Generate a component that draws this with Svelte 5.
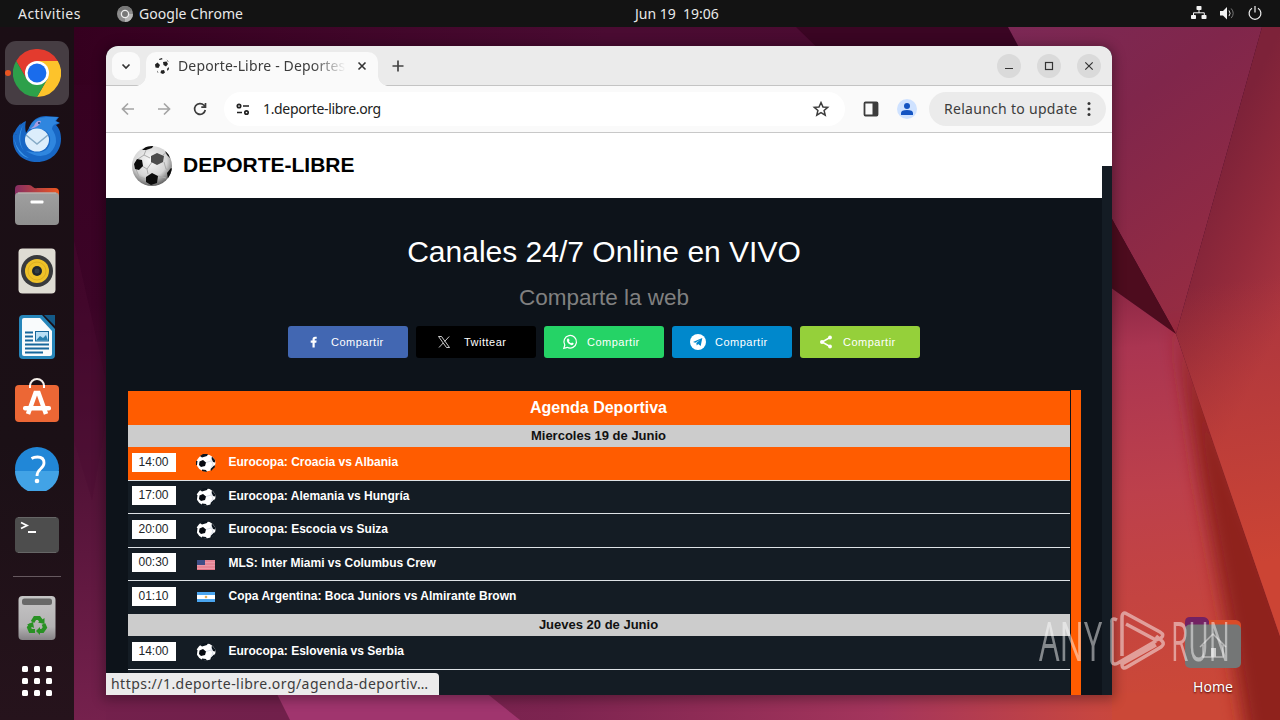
<script>
	const shares = [
		{ name: 'facebook', label: 'Compartir', color: '#4267b2' },
		{ name: 'twitter', label: 'Twittear', color: '#000000' },
		{ name: 'whatsapp', label: 'Compartir', color: '#25d366' },
		{ name: 'telegram', label: 'Compartir', color: '#0088cc' },
		{ name: 'sharethis', label: 'Compartir', color: '#95d03a' }
	]

	const agenda = [
		{
			day: 'Miercoles 19 de Junio',
			events: [
				{ time: '14:00', icon: 'ball', title: 'Eurocopa: Croacia vs Albania', active: true },
				{ time: '17:00', icon: 'ball', title: 'Eurocopa: Alemania vs Hungría' },
				{ time: '20:00', icon: 'ball', title: 'Eurocopa: Escocia vs Suiza' },
				{ time: '00:30', icon: 'usa', title: 'MLS: Inter Miami vs Columbus Crew' },
				{ time: '01:10', icon: 'arg', title: 'Copa Argentina: Boca Juniors vs Almirante Brown' }
			]
		},
		{
			day: 'Jueves 20 de Junio',
			events: [
				{ time: '14:00', icon: 'ball', title: 'Eurocopa: Eslovenia vs Serbia' }
			]
		}
	]

	const dots = [0, 1, 2, 3, 4, 5, 6, 7, 8]
</script>

<div class="desktop">
	<svg class="wallpaper" viewBox="0 0 1280 720" preserveAspectRatio="none">
		<defs>
			<linearGradient id="base" gradientUnits="userSpaceOnUse" x1="0" y1="27" x2="0" y2="720">
				<stop offset="0" stop-color="#35001f" />
				<stop offset=".4" stop-color="#3c0427" />
				<stop offset=".62" stop-color="#4f1135" />
				<stop offset="1" stop-color="#75214d" />
			</linearGradient>
			<linearGradient id="top" x1="0" y1="0" x2="1" y2="0">
				<stop offset="0" stop-color="#35001f" />
				<stop offset=".55" stop-color="#4a0b32" />
				<stop offset="1" stop-color="#4b0b30" />
			</linearGradient>
			<linearGradient id="upper" x1="0" y1="0" x2=".6" y2="1">
				<stop offset="0" stop-color="#7b2855" />
				<stop offset=".4" stop-color="#80264b" />
				<stop offset="1" stop-color="#962c42" />
			</linearGradient>
			<linearGradient id="right" gradientUnits="userSpaceOnUse" x1="1190" y1="210" x2="1310" y2="270">
				<stop offset="0" stop-color="#7d2239" />
				<stop offset=".5" stop-color="#932a3b" />
				<stop offset="1" stop-color="#ab3540" />
			</linearGradient>
			<linearGradient id="rightLow" gradientUnits="userSpaceOnUse" x1="1240" y1="280" x2="1280" y2="560">
				<stop offset="0" stop-color="#ca4433" stop-opacity="0" />
				<stop offset="1" stop-color="#cc4434" />
			</linearGradient>
			<linearGradient id="lower" gradientUnits="userSpaceOnUse" x1="1130" y1="285" x2="1170" y2="700">
				<stop offset="0" stop-color="#8b2744" />
				<stop offset=".15" stop-color="#aa3551" />
				<stop offset=".5" stop-color="#bd404b" />
				<stop offset="1" stop-color="#cb4837" />
			</linearGradient>
			<linearGradient id="bottom" gradientUnits="userSpaceOnUse" x1="74" y1="0" x2="1150" y2="0">
				<stop offset="0" stop-color="#73204c" />
				<stop offset=".2" stop-color="#71204b" />
				<stop offset=".45" stop-color="#7d2450" />
				<stop offset=".75" stop-color="#a4355c" />
				<stop offset=".95" stop-color="#c74640" />
				<stop offset="1" stop-color="#cb4837" />
			</linearGradient>
			<filter id="soft" x="-50%" y="-20%" width="200%" height="140%"><feGaussianBlur stdDeviation="9" /></filter>
		</defs>
		<rect width="1280" height="720" fill="url(#base)" />
		<path d="M74 27H1010L1040 85H74Z" fill="url(#top)" />
		<path d="M796 27H1010L1024 60H830Z" fill="#3a0523" />
		<path d="M74 240L106 380V420L92 500L74 440Z" fill="#4a0d31" opacity=".4" />
		<path d="M106 694H1200V720H106Z" fill="url(#bottom)" />
		<path d="M270 680L290 720H520L470 680Z" fill="#a0356e" />
		<path d="M1008 27H1262L1176 334L1112 219Z" fill="url(#upper)" />
		<path d="M1112 219L1176 334L1100 280V200Z" fill="#4d0c1e" />
		<path d="M1100 280L1176 334L1280 640V694H1100Z" fill="url(#lower)" />
		<path d="M1112 693H1290V720H1112Z" fill="#cb4837" />
		<path d="M1176 320L1300 640V760H1250L1232 650L1200 480Z" fill="#8f231b" filter="url(#soft)" />
		<path d="M1262 27H1280V636L1176 334Z" fill="url(#right)" />
		<path d="M1262 27H1280V636L1176 334Z" fill="url(#rightLow)" />
	</svg>

	<header class="topbar">
		<span class="activities">Activities</span>
		<span class="app">
			<svg width="16" height="16" viewBox="0 0 16 16">
				<circle cx="8" cy="8" r="8" fill="#8b8b8b" />
				<path d="M8 8L1 4A8 8 0 0 1 15 4Z" fill="#777" />
				<path d="M8 8h8a8 8 0 0 1-8 8Z" fill="#b5b5b5" />
				<circle cx="8" cy="8" r="3.6" fill="#777" stroke="#eee" stroke-width="1.3" />
			</svg>
			Google Chrome
		</span>
		<span class="clock">Jun 19&nbsp; 19:06</span>
		<span class="tray">
			<svg width="16" height="16" viewBox="0 0 16 16" fill="#f2f2f2">
				<rect x="5.5" y="0" width="5" height="4" rx=".8" />
				<rect x="0" y="9" width="5" height="4" rx=".8" />
				<rect x="10.500" y="9" width="5" height="4" rx=".8" />
				<path d="M8 4v3M2.500 9V6.800h10.800V9" fill="none" stroke="#f2f2f2" />
			</svg>
			<svg width="16" height="16" viewBox="0 0 16 16" fill="none">
				<path d="M1 5h3L8 1v12.500L4 9.500H1Z" fill="#f2f2f2" />
				<path d="M10 4.500q2.200 2.800 0 5.600" stroke="#ddd" />
				<path d="M12.200 2.500q4 4.800 0 9.600" stroke="#777" />
			</svg>
			<svg width="16" height="16" viewBox="0 0 16 16" fill="none" stroke="#f2f2f2" stroke-width="1.2">
				<path d="M5 2.300A5.900 5.900 0 1 0 11 2.300M8 0v6.500" />
			</svg>
		</span>
	</header>

	<nav class="dock">
		<div class="slot current">
			<svg width="48" height="48" viewBox="0 0 48 48">
				<path d="M24 12H44.800A24 24 0 0 1 24 48L34.400 30Z" fill="#fdc32b" />
				<path d="M3.200 12A24 24 0 0 1 44.800 12H24L13.600 30Z" fill="#e33b2e" />
				<path d="M3.200 12L13.600 30H24L34.400 30L24 48A24 24 0 0 1 3.200 12Z" fill="#2da04a" />
				<circle cx="24" cy="24" r="12" fill="#fff" />
				<circle cx="24" cy="24" r="9.400" fill="#1a6cec" />
			</svg>
		</div>
		<div class="slot">
			<svg width="50" height="48" viewBox="0 0 50 48">
				<path d="M9 8C4 13 1 19 1 26C2 39 12 47 25 47C39 47 49 37 49 24C49 17 47 13 44 10L48 8L44 6L47 2L34 1C26 1 20 5 17 13L14 18C13 14 13 10 14 6C8 8 5 14 4 20L2 17Q0 21 1 26Z" fill="#1867c5" />
				<path d="M17 13Q22 2 34 2H46L43 6L47 8Q40 9 40 14Q49 27 38 38Q28 45 14 36Q40 42 38 22Q36 12 18 14Z" fill="#2f86df" />
				<path d="M2 23Q5 37 17 43Q5 41 2 23M11 10Q5 26 12 36Q3 25 11 10" fill="#3d97e8" />
				<ellipse cx="25" cy="25" rx="12" ry="11.500" fill="#dcedfb" />
				<path d="M14 20L25 29L36 20" fill="none" stroke="#86abc7" stroke-width="1.500" />
				<path d="M22 11Q24 5 29 6Q28 12 18 14Z" fill="#a99ee0" />
				<circle cx="27" cy="8" r="1" fill="#173779" />
			</svg>
		</div>
		<div class="slot">
			<svg width="44" height="42" viewBox="0 0 44 42">
				<defs>
					<linearGradient id="folder"><stop stop-color="#852d63" /><stop offset="1" stop-color="#ed5720" /></linearGradient>
					<linearGradient id="front" x2="0" y2="1"><stop stop-color="#9f9f9f" /><stop offset="1" stop-color="#8f8f8f" /></linearGradient>
				</defs>
				<path d="M0 5Q0 1 4 1H14Q16 1 18 3T22 4H40Q44 4 44 8V20H0Z" fill="url(#folder)" />
				<rect y="8.500" width="44" height="32.500" rx="4" fill="url(#front)" />
				<path d="M3 9H41" stroke="#c5b9b5" />
				<rect x="15.500" y="16.500" width="13" height="3" rx="1" fill="#fff" />
			</svg>
		</div>
		<div class="slot">
			<svg width="38" height="46" viewBox="0 0 38 46">
				<rect x=".5" y=".5" width="37" height="45" rx="4" fill="#dfdcd3" />
				<circle cx="19" cy="23" r="16" fill="#393a3d" />
				<circle cx="19" cy="23" r="12" fill="#efc128" />
				<circle cx="19" cy="23" r="9" fill="none" stroke="#dcae20" />
				<circle cx="19" cy="23" r="5" fill="#20272d" />
				<circle cx="19" cy="23" r="2.500" fill="#343e46" />
			</svg>
		</div>
		<div class="slot">
			<svg width="38" height="46" viewBox="0 0 38 46">
				<path d="M5 1H24L37 15V41Q37 45 33 45H5Q1 45 1 41V5Q1 1 5 1Z" fill="#2786ba" />
				<path d="M26 1H37V12Z" fill="#145a88" />
				<path d="M6 4H22L34 17V40Q34 42 32 42H6Q4 42 4 40V6Q4 4 6 4Z" fill="#f9fbfc" />
				<path d="M7 18.500h8M7 22.500h8M7 26.500h8M7 30.500h24M7 34.500h24M7 38.500h18" stroke="#17679b" stroke-width="2" />
				<rect x="17.500" y="17.500" width="13" height="9.500" fill="#b7def5" stroke="#17679b" />
				<path d="M18 26.500L22 22L25 24L28 21L30 26.500Z" fill="#287fae" />
			</svg>
		</div>
		<div class="slot">
			<svg class="store" width="44" height="46" viewBox="0 0 44 46">
				<path d="M15 9V8a7 7 0 0 1 14 0V9" fill="none" stroke="#f5eee9" stroke-width="2" />
				<rect y="7" width="44" height="37" rx="4" fill="#ec6735" />
				<path d="M15 10v-3M29 10v-3" stroke="#fff" stroke-width="2" />
				<path d="M13 36L20.500 15H23.500L31 36" fill="none" stroke="#fff" stroke-width="4.500" />
				<rect x="8" y="28" width="28" height="4.500" rx="2" fill="#fff" />
			</svg>
		</div>
		<div class="slot">
			<svg width="44" height="44" viewBox="0 0 44 44">
				<circle cx="22" cy="22" r="22" fill="#2187d7" />
				<path d="M0 24H44A22 22 0 0 1 0 24Z" fill="#42a3e6" />
				<path d="M16.500 11.500Q19 10 22.500 10Q29 10 29 16Q29 19 25.500 22Q22 25 22 29" fill="none" stroke="#fff" stroke-width="2.800" />
				<circle cx="22" cy="34" r="2.300" fill="#fff" />
			</svg>
		</div>
		<div class="slot">
			<svg width="44" height="36" viewBox="0 0 44 36">
				<rect width="44" height="36" rx="4" fill="#4d4d4d" />
				<path d="M3 .500H41M3 35.500H41" stroke="#666" />
				<path d="M6 5.500L12 8.500L6 11.500M13 15H21" fill="none" stroke="#fff" stroke-width="1.800" />
			</svg>
		</div>
		<hr />
		<div class="slot">
			<svg width="38" height="46" viewBox="0 0 38 46">
				<defs><linearGradient id="bin" x2="0" y2="1"><stop stop-color="#c5c5c5" /><stop offset=".7" stop-color="#b4b2b4" /><stop offset="1" stop-color="#858285" /></linearGradient></defs>
				<rect x=".5" y="1" width="37" height="44" rx="4" fill="url(#bin)" />
				<rect x="4" y="3.500" width="30" height="6.500" rx="2.500" fill="#686868" />
				<g fill="none" stroke="#299124" stroke-width="4">
					<path d="M14.500 27L17 23H21L23.500 26.500" />
					<path d="M25.500 29L27 32.500L24.500 36H20.500" />
					<path d="M17 36H12.500L11 32.500L13 29.500" />
				</g>
				<path d="M20 27.500L26.500 23V29ZM22 32V40L18 36ZM9 29.500L15 27L16 33Z" fill="#299124" />
			</svg>
		</div>
		<div class="slot launcher">
			{#each dots as dot (dot)}
				<i></i>
			{/each}
		</div>
	</nav>

	<div class="home">
		<svg width="56" height="52" viewBox="0 0 56 52">
			<path d="M0 5Q0 0 5 0H18L24 3H51Q56 4 56 8V25H0Z" fill="#d94b28" />
			<path d="M0 25V5Q0 0 5 0H18Q22 0 24 4V10H8Z" fill="#732163" />
			<rect y="7.500" width="56" height="43.500" rx="5" fill="#747676" />
			<path d="M15 30L28 17L41 30M18 28V40H38V28" fill="none" stroke="#b6b6b6" stroke-width="1.500" />
			<rect x="26" y="31" width="5" height="9" fill="#ccc" />
		</svg>
		<span>Home</span>
	</div>

	<main class="window">
		<div class="tabs">
			<div class="search">
				<svg width="10" height="10" viewBox="0 0 10 10"><path d="M1.500 3.500L5 7L8.500 3.500" fill="none" stroke="#333" stroke-width="1.700" /></svg>
			</div>
			<div class="tab">
				<svg width="16" height="16" viewBox="0 0 16 16" fill="#222">
					<path d="M1 6.500L3.500 4.500L6 7L4.500 10L1.500 9.500Z" />
					<path d="M9 4L12.500 3.500L14 6L12 8.500L9.500 7Z" />
					<path d="M5 1L8 0L8.500 1.200L5.500 2ZM13 11L14.500 9L15 11L13.500 13ZM7 12.500L10 12L11 14.500L9 16L6.500 15ZM3 12.500L4.500 14.500L3.500 14.500ZM12.500 1.200L14.500 3.500L14 4Z" />
				</svg>
				<span class="tab-title">Deporte-Libre - Deportes</span>
				<svg width="10" height="10" viewBox="0 0 10 10"><path d="M1.500 1.500L8.500 8.500M8.500 1.500L1.500 8.500" stroke="#333" stroke-width="1.600" /></svg>
			</div>
			<svg class="plus" width="12" height="12" viewBox="0 0 12 12"><path d="M6 .5V11.500M.5 6H11.500" stroke="#444" stroke-width="1.700" /></svg>
			<div class="controls">
				<span><svg width="10" height="10" viewBox="0 0 10 10"><path d="M1 7.500H9" stroke="#333" /></svg></span>
				<span><svg width="10" height="10" viewBox="0 0 10 10"><rect x="1.500" y="1.500" width="7" height="7" fill="none" stroke="#333" stroke-width="1.200" /></svg></span>
				<span><svg width="10" height="10" viewBox="0 0 10 10"><path d="M1.300 1.300L8.700 8.700M8.700 1.300L1.300 8.700" stroke="#333" stroke-width="1.200" /></svg></span>
			</div>
		</div>

		<div class="toolbar">
			<div class="nav">
				<svg width="16" height="16" viewBox="0 0 16 16" fill="none" stroke="#a4a4a4" stroke-width="1.700"><path d="M14 8H3M8 2.500L2.500 8L8 13.500" /></svg>
				<svg width="16" height="16" viewBox="0 0 16 16" fill="none" stroke="#a4a4a4" stroke-width="1.700"><path d="M2 8H13M8 2.500L13.500 8L8 13.500" /></svg>
				<svg width="16" height="16" viewBox="0 0 16 16" fill="none" stroke="#3c3c3c" stroke-width="1.700"><path d="M13.300 9A5.400 5.400 0 1 1 12 4.300L13.500 6M13.500 2V6.200H9.300" /></svg>
			</div>
			<div class="address">
				<svg width="16" height="14" viewBox="0 0 16 14" fill="none" stroke="#222" stroke-width="1.700">
					<circle cx="4" cy="4" r="1.700" /><path d="M8 4H14M2 10.500H7" /><circle cx="11.500" cy="10.500" r="1.700" />
				</svg>
				<span>1.deporte-libre.org</span>
				<svg width="18" height="18" viewBox="0 0 18 18" fill="none" stroke="#3c3c3c" stroke-width="1.500"><path d="M9 2.500L11 7L15.700 7.300L12.100 10.500L13.200 15.200L9 12.700L4.800 15.200L5.900 10.500L2.300 7.300L7 7Z" /></svg>
			</div>
			<svg class="panel" width="16" height="16" viewBox="0 0 16 16"><rect x="1.500" y="1.500" width="13" height="13" rx="1" fill="none" stroke="#3c3c3c" stroke-width="1.800" /><path d="M9.500 2H14V14H9.500Z" fill="#3c3c3c" /></svg>
			<div class="profile">
				<svg width="14" height="14" viewBox="0 0 14 14" fill="#1454c2"><circle cx="7" cy="4" r="3" /><path d="M1 13V11Q1 8 7 8T13 11V13Z" /></svg>
			</div>
			<div class="relaunch">
				<span>Relaunch to update</span>
				<svg width="4" height="16" viewBox="0 0 4 16" fill="#333"><circle cx="2" cy="2.500" r="1.500" /><circle cx="2" cy="8" r="1.500" /><circle cx="2" cy="13.500" r="1.500" /></svg>
			</div>
		</div>

		<div class="viewport">
			<div class="page">
				<div class="brand">
					<svg width="42" height="42" viewBox="0 0 42 42">
						<defs>
							<radialGradient id="ball" cx=".45" cy=".35" r=".65"><stop stop-color="#f8f8f8" /><stop offset=".65" stop-color="#d5d5d5" /><stop offset="1" stop-color="#666" /></radialGradient>
							<clipPath id="round"><circle cx="21" cy="21" r="20" /></clipPath>
						</defs>
						<circle cx="21" cy="21" r="20" fill="url(#ball)" />
						<g clip-path="url(#round)">
							<path d="M15 5L13 10L19 13M13 10L7 14M11 21L16 24L17 29M16 24L21 17M33 17L35 24L38 25M27 31L35 33M32 10L36 7M5 24L8 32L15 34" fill="none" stroke="#aaa" />
							<path d="M3 19L6 14L11 15L12 21L8 25L4 24ZM15 32L21 28L27 31L26 38L20 40L15 37ZM36 28L40 23L42 24L40 31L37 34ZM11 5L16 1L23 0L21 3L15 5ZM34 6L38 9L39 13L36 10Z" fill="#0c0c0c" />
							<path d="M20 11L26 8L33 11L32 17L26 20L20 17Z" fill="#4c4c4c" />
						</g>
					</svg>
					<h1>DEPORTE-LIBRE</h1>
				</div>
				<h2>Canales 24/7 Online en VIVO</h2>
				<h3>Comparte la web</h3>
				<div class="shares">
					{#each shares as share (share.name)}
						<div class="share {share.name}" style="background: {share.color}">
							<svg width="16" height="16" viewBox="0 0 16 16" fill="#fff">
								{#if share.name == 'facebook'}
									<path d="M6.500 13.500V8.700H4.700V6.600H6.500V5.200Q6.500 2.700 9 2.700H10.700V4.700H9.700Q8.700 4.700 8.700 5.600V6.600H10.600L10.300 8.700H8.700V13.500Z" />
								{:else if share.name == 'twitter'}
									<path d="M2.500 2.500H5.500L13.500 13.500H10.500ZM13.200 2.500L8.600 7.500M7.300 8.900L3 13.500" fill="none" stroke="#fff" stroke-width=".8" />
								{:else if share.name == 'whatsapp'}
									<path d="M1.800 14.300L2.800 11A6.300 6.300 0 1 1 5.200 13.300Z" fill="none" stroke="#fff" stroke-width="1.200" />
									<path d="M5.500 4.500L7 4.700L7.500 6.500L6.900 7.200Q7.700 8.700 9.200 9.300L10 8.500L11.700 9.300Q11.500 11.200 9.700 11.200Q5 9.800 4.800 6.100Z" />
								{:else if share.name == 'telegram'}
									<circle cx="8" cy="8" r="8" />
									<path d="M3 8L12.300 4L10.700 12L8.100 10.100L6.800 11.500L6.300 9L10.500 5.600L5.300 8.700Z" fill="#08c" />
								{:else}
									<path d="M12 3.500L4 8L12 12.500" fill="none" stroke="#fff" stroke-width="1.500" /><circle cx="12" cy="3.500" r="1.900" /><circle cx="4" cy="8" r="2" /><circle cx="12" cy="12.500" r="1.900" />
								{/if}
							</svg>
							<span>{share.label}</span>
						</div>
					{/each}
				</div>

				<div class="frame">
					<div class="agenda">
						<div class="agenda-title">Agenda Deportiva</div>
						{#each agenda as group (group.day)}
							<div class="day">{group.day}</div>
							{#each group.events as event}
								<div class="event" class:active={event.active}>
									<span class="time">{event.time}</span>
									<svg class="flag" width="20" height="20" viewBox="0 0 20 20">
										{#if event.icon == 'ball'}
											<ellipse cx="10" cy="10" rx="9.500" ry="8.500" fill="#fff" />
											<path d="M3.500 8.500L7 7L10 9.500L9 13L5 14L3 12Z" fill="#05090f" />
											<path d="M4 3L7 1L12 1L11 3L6 4.500ZM16 3.500L19 7L19 9.500L17 9L15.500 5.500ZM18.500 12L19 14L15 18L14.500 16ZM6 16.500L10 17L11 19L6 18ZM0 8L1.500 8L1 12L0 12Z" fill="#0b141d" />
											<path d="M10 9.500L15 8L15.500 5.500M15 8L17 11L15 15" fill="none" stroke="#ced5e2" stroke-width=".8" />
										{:else if event.icon == 'usa'}
											<rect x="1" y="6" width="18" height="10" fill="#ec98a6" />
											<path d="M1 7H19M1 10H19M1 13H19M1 15.500H19" stroke="#df7284" />
											<rect x="1" y="6" width="8" height="5" fill="#3e4e87" />
										{:else}
											<rect x="1" y="5" width="18" height="10" fill="#fff" />
											<path d="M1 5H19V8H1ZM1 12H19V15H1Z" fill="#4aa5ef" />
											<circle cx="10" cy="10" r="1.300" fill="#e2b15c" />
										{/if}
									</svg>
									<b>{event.title}</b>
								</div>
							{/each}
						{/each}
					</div>
					<div class="inner-scroll"></div>
				</div>
			</div>
			<div class="scrollbar"><div class="thumb"></div></div>
		</div>
		<div class="status">https://1.deporte-libre.org/agenda-deportiv…</div>
	</main>

	<svg class="watermark" width="210" height="76" viewBox="-4 -8 210 76">
		<text x="1" y="51" textLength="63" lengthAdjust="spacingAndGlyphs">ANY</text>
		<text x="133" y="51" textLength="59" lengthAdjust="spacingAndGlyphs">RUN</text>
		<path d="M79 10Q73 7 74 13V50Q74 56 80 53L118 31M84 46V8Q84 1 89 4L122 22Q127 25 123 28L118 30L88 14M118 26L124 31Q127 34 123 37L89 57Q84 60 84 54L118 35" />
	</svg>
</div>

<style>
	:global(body) {
		overflow: hidden;
	}

	.desktop {
		position: relative;
		width: 1280px;
		height: 720px;
		overflow: hidden;
		display: flex;
		flex-direction: column;
		font-family: "Noto Sans", sans-serif;
		font-size: 14px;
	}

	svg {
		display: block;
		flex: none;
	}

	.wallpaper {
		position: absolute;
		inset: 0;
		width: 100%;
		height: 100%;
	}

	.topbar {
		position: relative;
		height: 27px;
		box-sizing: border-box;
		padding: 0 17px 0 18px;
		background: #131313;
		color: #e9e9e9;
		display: grid;
		grid-template-columns: 99px 518px 1fr auto;
		align-items: center;
		flex: none;
	}

	.activities {
		letter-spacing: .45px;
	}

	.app {
		display: flex;
		align-items: center;
		gap: 6px;
		letter-spacing: .05px;
	}

	.clock {
		padding-bottom: 1px;
		white-space: nowrap;
	}

	.tray {
		display: flex;
		gap: 12px;
	}

	.dock {
		position: relative;
		width: 74px;
		flex: 1;
		box-sizing: border-box;
		padding-top: 13px;
		background: linear-gradient(#1b0e15, #1b1016 60%, #26131c);
	}

	.slot {
		height: 66px;
		display: flex;
		align-items: center;
		justify-content: center;
	}

	.store {
		margin-bottom: 4px;
	}

	.current {
		width: 64px;
		height: 64px;
		margin: 1px 5px;
		border-radius: 11px;
		background: #463d43;
	}

	.current::before {
		content: "";
		position: absolute;
		left: 5px;
		width: 6px;
		height: 6px;
		border-radius: 50%;
		background: #e95420;
	}

	.dock hr {
		width: 48px;
		height: 1px;
		margin: 8px auto;
		border: 0;
		background: #66595f;
	}

	.launcher {
		display: grid;
		grid-template-columns: repeat(3, 6px);
		gap: 6px;
		height: 60px;
		align-content: center;
	}

	.launcher i {
		width: 6px;
		height: 6px;
		border-radius: 1.5px;
		background: #fff;
	}

	.home {
		position: absolute;
		left: 1173px;
		top: 617px;
		width: 80px;
		display: flex;
		flex-direction: column;
		align-items: center;
		gap: 8px;
		color: #fff;
		line-height: 20px;
		text-shadow: 0 1px 2px #400;
	}

	.window {
		position: absolute;
		left: 106px;
		top: 46px;
		width: 1006px;
		height: 649px;
		overflow: hidden;
		border-radius: 12px 12px 0 0;
		background: #0d131a;
		display: flex;
		flex-direction: column;
		box-shadow: 0 2px 12px 3px rgba(0, 0, 0, .3);
	}

	.tabs {
		height: 39px;
		flex: none;
		background: #ebebeb;
		border-bottom: 1px solid #c4c4c4;
		display: flex;
		align-items: center;
	}

	.search {
		width: 28px;
		height: 28px;
		margin: 0 6px;
		border-radius: 9px;
		background: #fafafa;
		display: flex;
		align-items: center;
		justify-content: center;
	}

	.tab {
		position: relative;
		width: 232px;
		height: 34px;
		margin-top: 6px;
		box-sizing: border-box;
		padding: 0 11px 6px 8px;
		border-radius: 10px 10px 0 0;
		background: #fafafa;
		display: flex;
		align-items: center;
		align-self: flex-start;
	}

	.tab::before,
	.tab::after {
		content: "";
		position: absolute;
		bottom: 0;
		width: 10px;
		height: 10px;
	}

	.tab::before {
		left: -10px;
		background: radial-gradient(circle at 0 0, transparent 9.5px, #fafafa 10px);
	}

	.tab::after {
		right: -10px;
		background: radial-gradient(circle at 100% 0, transparent 9.5px, #fafafa 10px);
	}

	.tab-title {
		flex: 1;
		margin: 0 11px 0 8px;
		padding-bottom: 2px;
		overflow: hidden;
		white-space: nowrap;
		color: #3c3c3c;
		letter-spacing: .15px;
		mask-image: linear-gradient(to right, #000 80%, transparent);
	}

	.plus {
		margin-left: 14px;
	}

	.controls {
		margin-left: auto;
		margin-right: 11px;
		display: flex;
		gap: 16px;
	}

	.controls span {
		width: 24px;
		height: 24px;
		border-radius: 50%;
		background: #dadada;
		display: flex;
		align-items: center;
		justify-content: center;
	}

	.toolbar {
		height: 46px;
		flex: none;
		border-bottom: 1px solid #c8c8c8;
		background: #fafafa;
		display: flex;
		align-items: center;
	}

	.nav {
		width: 118px;
		box-sizing: border-box;
		padding-left: 14px;
		display: flex;
		gap: 20px;
	}

	.address {
		width: 621px;
		height: 34px;
		border-radius: 17px;
		box-sizing: border-box;
		padding: 0 15px 0 11px;
		background: #fff;
		display: flex;
		align-items: center;
		color: #222;
	}

	.address span {
		flex: 1;
		margin-left: 12px;
		padding-bottom: 2px;
		letter-spacing: -.34px;
	}

	.panel {
		margin-left: 18px;
	}

	.profile {
		width: 20px;
		height: 20px;
		margin-left: 18px;
		border-radius: 50%;
		background: #cfe2ff;
		display: flex;
		align-items: center;
		justify-content: center;
	}

	.relaunch {
		width: 177px;
		height: 34px;
		margin-left: 12px;
		box-sizing: border-box;
		padding: 0 15px;
		border-radius: 17px;
		background: #ebebeb;
		display: flex;
		align-items: center;
		justify-content: space-between;
		white-space: nowrap;
		color: #3c3c3c;
	}

	.relaunch span {
		padding-bottom: 2px;
		letter-spacing: .29px;
	}

	.viewport {
		flex: 1;
		min-height: 0;
		display: flex;
		font-family: "Liberation Sans", Arial, sans-serif;
	}

	.page {
		width: 996px;
		overflow: hidden;
		display: flex;
		flex-direction: column;
		align-items: center;
	}

	.brand {
		width: 100%;
		height: 65px;
		flex: none;
		box-sizing: border-box;
		padding-left: 25px;
		background: #fff;
		display: flex;
		align-items: center;
		gap: 10px;
	}

	h1, h2, h3 {
		margin: 0;
		font-weight: 400;
		white-space: nowrap;
	}

	h1 {
		padding-bottom: 2px;
		font-size: 21px;
		font-weight: 700;
		color: #000;
	}

	h2 {
		margin-top: 36px;
		font-size: 30px;
		line-height: 36px;
		color: #fff;
	}

	h3 {
		margin-top: 14px;
		font-size: 22.5px;
		line-height: 27px;
		color: #808080;
	}

	.shares {
		margin-top: 15px;
		display: flex;
		gap: 8px;
	}

	.share {
		width: 120px;
		height: 32px;
		box-sizing: border-box;
		padding-left: 18px;
		border-radius: 3px;
		display: flex;
		align-items: center;
		gap: 9px;
		font-size: 11px;
		letter-spacing: .5px;
		color: #fff;
	}

	.twitter {
		padding-left: 20px;
		gap: 12px;
	}

	.frame {
		margin-top: 32px;
		width: 953px;
		flex: 1;
		min-height: 0;
		display: flex;
		gap: 1px;
	}

	.agenda {
		flex: 1;
		padding-top: 1px;
		overflow: hidden;
		background: linear-gradient(#0d131a 1px, #141c24 1px);
	}

	.inner-scroll {
		width: 10px;
		background: #ff5c00;
	}

	.agenda-title {
		height: 34px;
		line-height: 34px;
		background: #ff5c00;
		color: #fff;
		font-size: 16px;
		font-weight: 700;
		text-align: center;
	}

	.day {
		height: 22px;
		line-height: 22px;
		background: #ccc;
		color: #111;
		font-size: 13px;
		font-weight: 700;
		text-align: center;
	}

	.event {
		height: 33.5px;
		box-sizing: border-box;
		padding: 0 4px 2px;
		border-bottom: 1px solid #dee2e6;
		display: flex;
		align-items: center;
		color: #fff;
		font-size: 12px;
	}

	.event:has(+ .day) {
		height: 33px;
		border-color: transparent;
	}

	.active {
		background: #ff5c00;
	}

	.time {
		width: 44px;
		height: 19px;
		line-height: 19px;
		background: #fff;
		color: #212529;
		text-align: center;
	}

	.flag {
		margin: 2px 13px 0 20px;
	}

	.scrollbar {
		width: 10px;
		background: #141c24;
	}

	.thumb {
		height: 33px;
		background: #fff;
	}

	.status {
		position: absolute;
		left: 0;
		bottom: 0;
		width: 333px;
		height: 22px;
		line-height: 22px;
		box-sizing: border-box;
		padding-left: 5px;
		border-radius: 0 4px 0 0;
		background: #ebebeb;
		color: #3c3c3c;
		letter-spacing: .46px;
		white-space: nowrap;
	}

	.watermark {
		position: absolute;
		left: 1034px;
		top: 602px;
		fill: #fff;
		opacity: .48;
	}

	.watermark text {
		font-family: "Open Sans", Lato, sans-serif;
		font-size: 54px;
		font-weight: 400;
	}

	.watermark path {
		fill: none;
		stroke: #fff;
		stroke-width: 3.5;
	}
</style>
